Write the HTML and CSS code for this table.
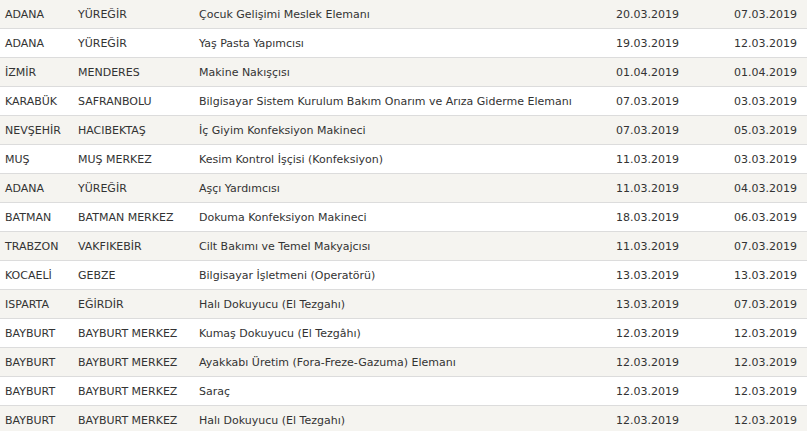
FILE: index.html
```html
<!DOCTYPE html>
<html lang="tr">
<head>
    <meta charset="UTF-8">
    <meta name="viewport" content="width=device-width, initial-scale=1.0">
    <title>İlanlar</title>
    <link rel="stylesheet" href="styles.css">
</head>
<body>
    <table class="jobs">
        <colgroup>
            <col class="c-city">
            <col class="c-district">
            <col class="c-title">
            <col class="c-date">
            <col class="c-date2">
        </colgroup>
        <tbody>
            <tr><td>ADANA</td><td>YÜREĞİR</td><td>Çocuk Gelişimi Meslek Elemanı</td><td>20.03.2019</td><td>07.03.2019</td></tr>
            <tr><td>ADANA</td><td>YÜREĞİR</td><td>Yaş Pasta Yapımcısı</td><td>19.03.2019</td><td>12.03.2019</td></tr>
            <tr><td>İZMİR</td><td>MENDERES</td><td>Makine Nakışçısı</td><td>01.04.2019</td><td>01.04.2019</td></tr>
            <tr><td>KARABÜK</td><td>SAFRANBOLU</td><td>Bilgisayar Sistem Kurulum Bakım Onarım ve Arıza Giderme Elemanı</td><td>07.03.2019</td><td>03.03.2019</td></tr>
            <tr><td>NEVŞEHİR</td><td>HACIBEKTAŞ</td><td>İç Giyim Konfeksiyon Makineci</td><td>07.03.2019</td><td>05.03.2019</td></tr>
            <tr><td>MUŞ</td><td>MUŞ MERKEZ</td><td>Kesim Kontrol İşçisi (Konfeksiyon)</td><td>11.03.2019</td><td>03.03.2019</td></tr>
            <tr><td>ADANA</td><td>YÜREĞİR</td><td>Aşçı Yardımcısı</td><td>11.03.2019</td><td>04.03.2019</td></tr>
            <tr><td>BATMAN</td><td>BATMAN MERKEZ</td><td>Dokuma Konfeksiyon Makineci</td><td>18.03.2019</td><td>06.03.2019</td></tr>
            <tr><td>TRABZON</td><td>VAKFIKEBİR</td><td>Cilt Bakımı ve Temel Makyajcısı</td><td>11.03.2019</td><td>07.03.2019</td></tr>
            <tr><td>KOCAELİ</td><td>GEBZE</td><td>Bilgisayar İşletmeni (Operatörü)</td><td>13.03.2019</td><td>13.03.2019</td></tr>
            <tr><td>ISPARTA</td><td>EĞİRDİR</td><td>Halı Dokuyucu (El Tezgahı)</td><td>13.03.2019</td><td>07.03.2019</td></tr>
            <tr><td>BAYBURT</td><td>BAYBURT MERKEZ</td><td>Kumaş Dokuyucu (El Tezgâhı)</td><td>12.03.2019</td><td>12.03.2019</td></tr>
            <tr><td>BAYBURT</td><td>BAYBURT MERKEZ</td><td>Ayakkabı Üretim (Fora-Freze-Gazuma) Elemanı</td><td>12.03.2019</td><td>12.03.2019</td></tr>
            <tr><td>BAYBURT</td><td>BAYBURT MERKEZ</td><td>Saraç</td><td>12.03.2019</td><td>12.03.2019</td></tr>
            <tr><td>BAYBURT</td><td>BAYBURT MERKEZ</td><td>Halı Dokuyucu (El Tezgahı)</td><td>12.03.2019</td><td>12.03.2019</td></tr>
        </tbody>
    </table>
</body>
</html>
```

FILE: styles.css
```css
body {
    margin: 0;
    background: #fff;
    font-family: "DejaVu Sans", Verdana, sans-serif;
    font-size: 11px;
    color: #333;
    overflow: hidden;
}
.jobs {
    width: 807px;
    border-collapse: collapse;
    table-layout: fixed;
    margin-top: -1px;
}
.c-city { width: 73px; }
.c-district { width: 121px; }
.c-title { width: 417px; }
.c-date { width: 118px; }
.c-date2 { width: 78px; }
.jobs td {
    height: 28px;
    padding: 0 0 0 5px;
    border-top: 1px solid #dcdcdc;
    border-bottom: 1px solid #dcdcdc;
    white-space: nowrap;
    vertical-align: middle;
}
.jobs tr:nth-child(odd) {
    background: #f5f4f0;
}
```
